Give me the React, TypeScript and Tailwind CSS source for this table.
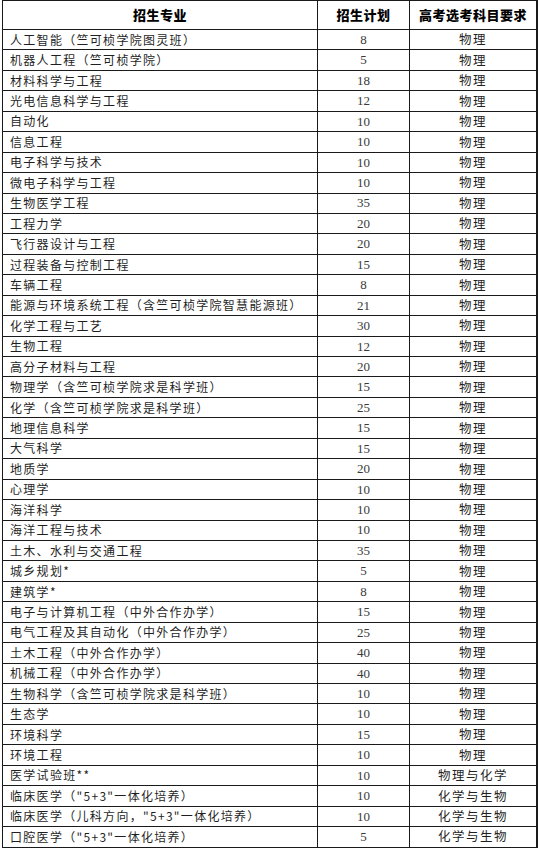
import React from 'react';

type Row = { name: string; plan: number; subject: string };

const rows: Row[] = [
	{ name: '人工智能（竺可桢学院图灵班）', plan: 8, subject: '物理' },
	{ name: '机器人工程（竺可桢学院）', plan: 5, subject: '物理' },
	{ name: '材料科学与工程', plan: 18, subject: '物理' },
	{ name: '光电信息科学与工程', plan: 12, subject: '物理' },
	{ name: '自动化', plan: 10, subject: '物理' },
	{ name: '信息工程', plan: 10, subject: '物理' },
	{ name: '电子科学与技术', plan: 10, subject: '物理' },
	{ name: '微电子科学与工程', plan: 10, subject: '物理' },
	{ name: '生物医学工程', plan: 35, subject: '物理' },
	{ name: '工程力学', plan: 20, subject: '物理' },
	{ name: '飞行器设计与工程', plan: 20, subject: '物理' },
	{ name: '过程装备与控制工程', plan: 15, subject: '物理' },
	{ name: '车辆工程', plan: 8, subject: '物理' },
	{ name: '能源与环境系统工程（含竺可桢学院智慧能源班）', plan: 21, subject: '物理' },
	{ name: '化学工程与工艺', plan: 30, subject: '物理' },
	{ name: '生物工程', plan: 12, subject: '物理' },
	{ name: '高分子材料与工程', plan: 20, subject: '物理' },
	{ name: '物理学（含竺可桢学院求是科学班）', plan: 15, subject: '物理' },
	{ name: '化学（含竺可桢学院求是科学班）', plan: 25, subject: '物理' },
	{ name: '地理信息科学', plan: 15, subject: '物理' },
	{ name: '大气科学', plan: 15, subject: '物理' },
	{ name: '地质学', plan: 20, subject: '物理' },
	{ name: '心理学', plan: 10, subject: '物理' },
	{ name: '海洋科学', plan: 10, subject: '物理' },
	{ name: '海洋工程与技术', plan: 10, subject: '物理' },
	{ name: '土木、水利与交通工程', plan: 35, subject: '物理' },
	{ name: '城乡规划*', plan: 5, subject: '物理' },
	{ name: '建筑学*', plan: 8, subject: '物理' },
	{ name: '电子与计算机工程（中外合作办学）', plan: 15, subject: '物理' },
	{ name: '电气工程及其自动化（中外合作办学）', plan: 25, subject: '物理' },
	{ name: '土木工程（中外合作办学）', plan: 40, subject: '物理' },
	{ name: '机械工程（中外合作办学）', plan: 40, subject: '物理' },
	{ name: '生物科学（含竺可桢学院求是科学班）', plan: 10, subject: '物理' },
	{ name: '生态学', plan: 10, subject: '物理' },
	{ name: '环境科学', plan: 15, subject: '物理' },
	{ name: '环境工程', plan: 10, subject: '物理' },
	{ name: '医学试验班**', plan: 10, subject: '物理与化学' },
	{ name: '临床医学（"5+3"一体化培养）', plan: 10, subject: '化学与生物' },
	{ name: '临床医学（儿科方向，"5+3"一体化培养）', plan: 10, subject: '化学与生物' },
	{ name: '口腔医学（"5+3"一体化培养）', plan: 5, subject: '化学与生物' },
];

const cjk = "font-['Noto_Sans_CJK_SC',sans-serif]";

export default function App() {
	return (
		<div className="w-[540px] h-[848px] overflow-hidden bg-white">
			<div className="ml-[2px] w-[536px] border-l border-t border-[#1a1a1a] grid grid-cols-[315px_92px_128px]">

				{/* Header */}
				<div className={`h-[29px] border-r border-b border-[#1a1a1a] flex items-center justify-center text-[13px] font-black text-black tracking-[0.5px] ${cjk}`}>
					招生专业
				</div>
				<div className={`h-[29px] border-r border-b border-[#1a1a1a] flex items-center justify-center text-[13px] font-black text-black tracking-[0.5px] ${cjk}`}>
					招生计划
				</div>
				<div className={`h-[29px] border-r-2 border-b border-[#1a1a1a] flex items-center justify-center text-[13px] font-black text-black tracking-[0.5px] ${cjk}`}>
					高考选考科目要求
				</div>

				{/* Body */}
				{rows.map((r, i) => (
					<React.Fragment key={i}>
						<div className={`h-[20.45px] border-r border-b border-[#1a1a1a] flex items-center pl-[7px] text-[12px] tracking-[1.3px] text-[#1f1f1f] whitespace-nowrap ${cjk}`}>
							{r.name}
						</div>
						<div className="h-[20.45px] border-r border-b border-[#1a1a1a] flex items-center justify-center text-[13px] text-[#3a3a3a] font-['Liberation_Serif',serif]">
							{r.plan}
						</div>
						<div className={`h-[20.45px] border-r-2 border-b border-[#1a1a1a] flex items-center justify-center text-[12.5px] tracking-[1.5px] text-[#1f1f1f] ${cjk}`}>
							{r.subject}
						</div>
					</React.Fragment>
				))}
			</div>
		</div>
	);
}
